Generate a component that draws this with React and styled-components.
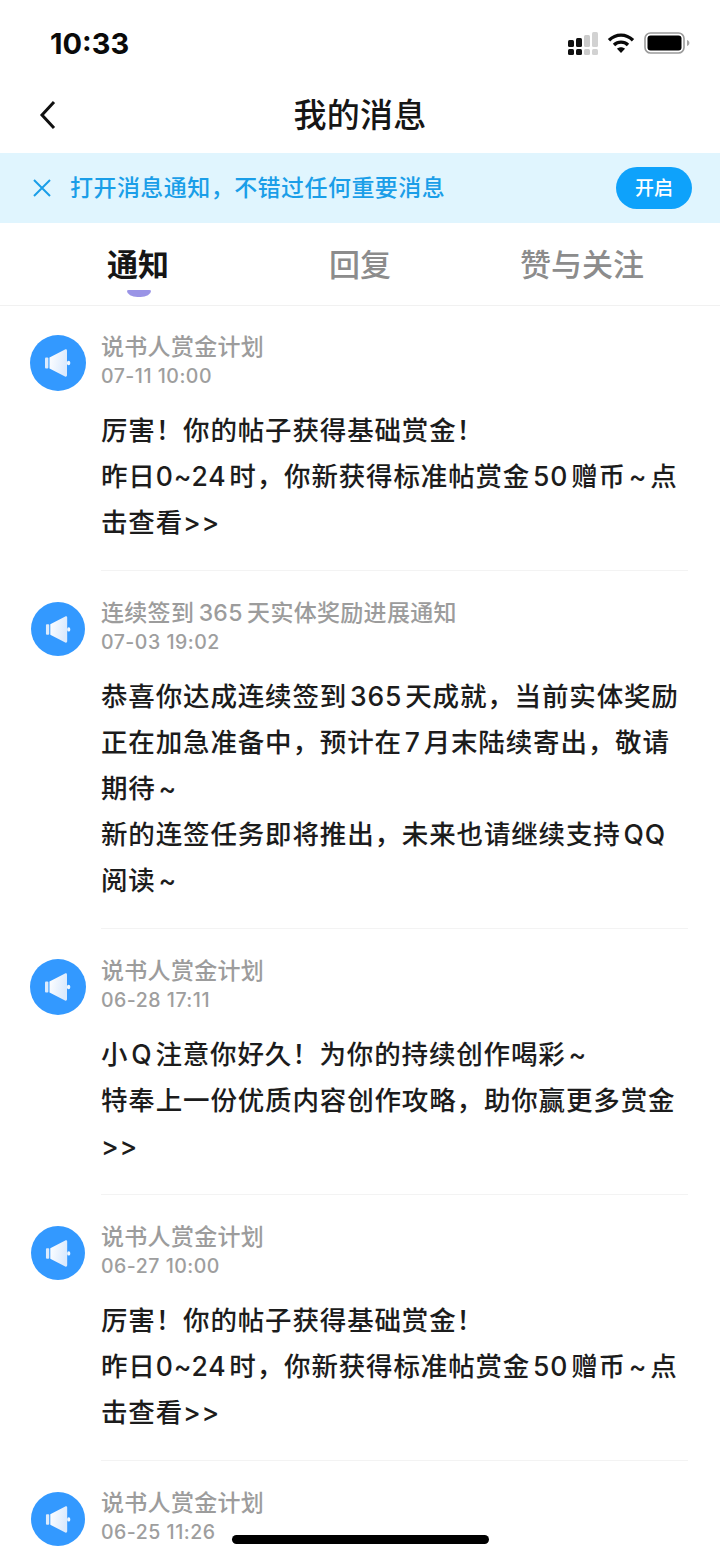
import React from 'react';
import styled, { createGlobalStyle } from 'styled-components';

const GlobalStyle = createGlobalStyle`
  html, body {
    margin: 0;
    padding: 0;
    background: #fff;
  }
  * {
    box-sizing: border-box;
  }
`;

const Page = styled.div`
  position: relative;
  width: 720px;
  height: 1559px;
  overflow: hidden;
  background: #fff;
  font-family: Inter, "Noto Sans CJK SC", "Noto Sans", sans-serif;
`;

const StatusBar = styled.div`
  height: 80px;
  padding: 6px 30px 0 50px;
  display: flex;
  align-items: center;
  justify-content: space-between;
`;

const Clock = styled.div`
  font-size: 29px;
  font-weight: 700;
  color: #0a0a0a;
`;

const StatusIcons = styled.div`
  display: flex;
  align-items: center;
  gap: 9px;
`;

const NavBar = styled.div`
  height: 73px;
  display: flex;
  align-items: center;
  justify-content: center;
  padding-bottom: 8px;
  position: relative;
`;

const BackIcon = styled.svg`
  position: absolute;
  left: 38px;
  top: 20px;
`;

const NavTitle = styled.h1`
  margin: 0;
  font-size: 33px;
  font-weight: 500;
  letter-spacing: 0.3px;
  color: #161616;
`;

const Banner = styled.div`
  height: 70px;
  padding: 0 28px 0 32px;
  display: flex;
  align-items: center;
  background: #e0f5fe;
`;

const BannerText = styled.div`
  margin-left: 18px;
  padding-bottom: 4px;
  flex: 1;
  font-size: 23px;
  font-weight: 500;
  letter-spacing: 0.45px;
  color: #1a9ee8;
`;

const OpenButton = styled.div`
  width: 76px;
  height: 42px;
  padding-bottom: 4px;
  border-radius: 21px;
  background: #0ea2fb;
  color: #fff;
  font-size: 19px;
  font-weight: 500;
  display: flex;
  align-items: center;
  justify-content: center;
`;

const Tabs = styled.div`
  height: 83px;
  display: grid;
  grid-template-columns: repeat(3, 222px);
  padding-left: 27px;
  border-bottom: 1px solid #f1f1f1;
`;

const Tab = styled.div`
  position: relative;
  padding-top: 19px;
  text-align: center;
  font-size: 31px;
  line-height: 46px;
  font-weight: ${(p) => (p.$active ? 700 : 500)};
  color: ${(p) => (p.$active ? '#161616' : '#8c8c8c')};
`;

const TabMark = styled.span`
  position: absolute;
  left: 100px;
  top: 67px;
  width: 24px;
  height: 7px;
  border-radius: 2px 2px 12px 12px / 1px 1px 7px 7px;
  background: #9a94e6;
`;

const List = styled.div`
  display: flex;
  flex-direction: column;
  padding-right: 32px;
`;

const Item = styled.div`
  display: grid;
  grid-template-columns: 101px 1fr;
  padding-top: ${(p) => (p.$first ? '28px' : '29px')};
`;

const AvatarCell = styled.div`
  display: flex;
  justify-content: center;
  align-items: flex-start;
  padding: ${(p) => (p.$size === 56 ? '1px 0 0 15px' : '2px 0 0 15px')};
`;

const Avatar = styled.div`
  width: ${(p) => p.$size}px;
  height: ${(p) => p.$size}px;
  border-radius: 50%;
  background: #3399ff;
  display: flex;
  align-items: center;
  justify-content: center;
`;

const ItemMain = styled.div`
  border-bottom: ${(p) => (p.$last ? 'none' : '1px solid #f3f3f3')};
  padding-bottom: 25px;
`;

const ItemTitle = styled.div`
  font-size: 23px;
  line-height: 22px;
  padding-top: 2px;
  margin-bottom: 4px;
  letter-spacing: 0.3px;
  word-spacing: -2px;
  color: #9c9c9c;
  font-weight: 500;
`;

const ItemDate = styled.div`
  font-size: 19.5px;
  line-height: 28px;
  letter-spacing: 0.5px;
  color: #9e9e9e;
  font-weight: 500;
`;

const ItemBody = styled.div`
  margin-top: 17px;
  font-size: 26.5px;
  line-height: 46px;
  font-weight: 500;
  letter-spacing: 0.85px;
  word-spacing: -5px;
  color: #1c1c1c;
`;

const BodyLine = styled.div`
  white-space: nowrap;
`;

const HomeBar = styled.div`
  position: absolute;
  left: 232px;
  bottom: 15px;
  width: 257px;
  height: 9px;
  border-radius: 5px;
  background: #000;
`;

const CellIcon = () => (
  <svg width="30" height="23" viewBox="0 0 30 23">
    <rect x="0" y="8" width="6" height="7" rx="1.5" fill="#111" />
    <rect x="8" y="6" width="6" height="9" rx="1.5" fill="#111" />
    <rect x="16" y="3" width="6" height="12" rx="1.5" fill="#cbcbcb" />
    <rect x="24" y="0" width="6" height="15" rx="1.5" fill="#d2d2d2" />
    <rect x="0" y="17" width="6" height="6" rx="1.5" fill="#111" />
    <rect x="8" y="17" width="6" height="6" rx="1.5" fill="#111" />
    <rect x="16" y="17" width="6" height="6" rx="1.5" fill="#cbcbcb" />
    <rect x="24" y="17" width="6" height="6" rx="1.5" fill="#d2d2d2" />
  </svg>
);

const WifiIcon = () => (
  <svg width="28" height="22" viewBox="0 0 28 22" fill="none" stroke="#0a0a0a" strokeWidth="3.4">
    <path d="M2 8.2C9 1.4 19 1.4 26 8.2" />
    <path d="M7 13c4-3.8 10-3.8 14 0" />
    <path d="M14 21l-4-4.2c2.2-2 5.8-2 8 0z" fill="#0a0a0a" stroke="none" />
  </svg>
);

const BatteryIcon = () => (
  <svg width="46" height="22" viewBox="0 0 46 22">
    <rect x="1" y="1" width="39" height="20" rx="5.5" fill="none" stroke="#9b9b9b" strokeWidth="1.6" />
    <rect x="3.5" y="3.5" width="34" height="15" rx="3" fill="#000" />
    <path d="M43 8v6c1.6-.6 2.4-1.7 2.4-3s-.8-2.4-2.4-3z" fill="#a5a5a5" />
  </svg>
);

const SpeakerIcon = ({ scale }) => (
  <svg width={28 * scale} height={30 * scale} viewBox="0 0 28 30">
    <defs>
      <linearGradient id="horn" x1="0" y1="0" x2="1" y2="0.3">
        <stop offset="0" stopColor="#ffffff" />
        <stop offset="1" stopColor="#dbeafd" />
      </linearGradient>
    </defs>
    <rect x="1" y="9.5" width="3.4" height="11" rx="1" fill="#dcebfd" />
    <path d="M5.5 9.5 21 1.5c1-.5 2 0 2 1.2v24.6c0 1.2-1 1.7-2 1.2L5.5 20.5z" fill="url(#horn)" />
    <rect x="23" y="12.8" width="3.2" height="4.4" rx="1.6" fill="#eef6fe" />
  </svg>
);

const messages = [
  {
    title: '说书人赏金计划',
    date: '07-11 10:00',
    size: 56,
    lines: ['厉害！你的帖子获得基础赏金！', '昨日0~24 时，你新获得标准帖赏金 50 赠币 ~ 点', '击查看>>'],
  },
  {
    title: '连续签到 365 天实体奖励进展通知',
    date: '07-03 19:02',
    size: 54,
    lines: [
      '恭喜你达成连续签到 365 天成就，当前实体奖励',
      '正在加急准备中，预计在 7 月末陆续寄出，敬请',
      '期待 ~',
      '新的连签任务即将推出，未来也请继续支持 QQ',
      '阅读 ~',
    ],
  },
  {
    title: '说书人赏金计划',
    date: '06-28 17:11',
    size: 56,
    lines: ['小 Q 注意你好久！为你的持续创作喝彩 ~', '特奉上一份优质内容创作攻略，助你赢更多赏金', '>>'],
  },
  {
    title: '说书人赏金计划',
    date: '06-27 10:00',
    size: 54,
    lines: ['厉害！你的帖子获得基础赏金！', '昨日0~24 时，你新获得标准帖赏金 50 赠币 ~ 点', '击查看>>'],
  },
  {
    title: '说书人赏金计划',
    date: '06-25 11:26',
    size: 54,
    lines: [],
  },
];

const App = () => {
  return (
    <Page>
      <GlobalStyle />
      <StatusBar>
        <Clock>10:33</Clock>
        <StatusIcons>
          <CellIcon />
          <WifiIcon />
          <BatteryIcon />
        </StatusIcons>
      </StatusBar>
      <NavBar>
        <BackIcon width="20" height="30" viewBox="0 0 20 30" fill="none" stroke="#111" strokeWidth="3">
          <path d="M16 2 4 15l12 13" />
        </BackIcon>
        <NavTitle>我的消息</NavTitle>
      </NavBar>
      <Banner>
        <svg width="20" height="20" viewBox="0 0 20 20" fill="none" stroke="#1a9ee8" strokeWidth="2">
          <path d="M2 2l16 16M18 2 2 18" />
        </svg>
        <BannerText>打开消息通知，不错过任何重要消息</BannerText>
        <OpenButton>开启</OpenButton>
      </Banner>
      <Tabs>
        <Tab $active>
          通知
          <TabMark />
        </Tab>
        <Tab>回复</Tab>
        <Tab>赞与关注</Tab>
      </Tabs>
      <List>
        {messages.map((m, i) => (
          <Item key={i} $first={i === 0}>
            <AvatarCell $size={m.size}>
              <Avatar $size={m.size}>
                <SpeakerIcon scale={m.size / 56} />
              </Avatar>
            </AvatarCell>
            <ItemMain $last={i === messages.length - 1}>
              <ItemTitle>{m.title}</ItemTitle>
              <ItemDate>{m.date}</ItemDate>
              <ItemBody>
                {m.lines.map((line, j) => (
                  <BodyLine key={j}>{line}</BodyLine>
                ))}
              </ItemBody>
            </ItemMain>
          </Item>
        ))}
      </List>
      <HomeBar />
    </Page>
  );
};

export default App;
